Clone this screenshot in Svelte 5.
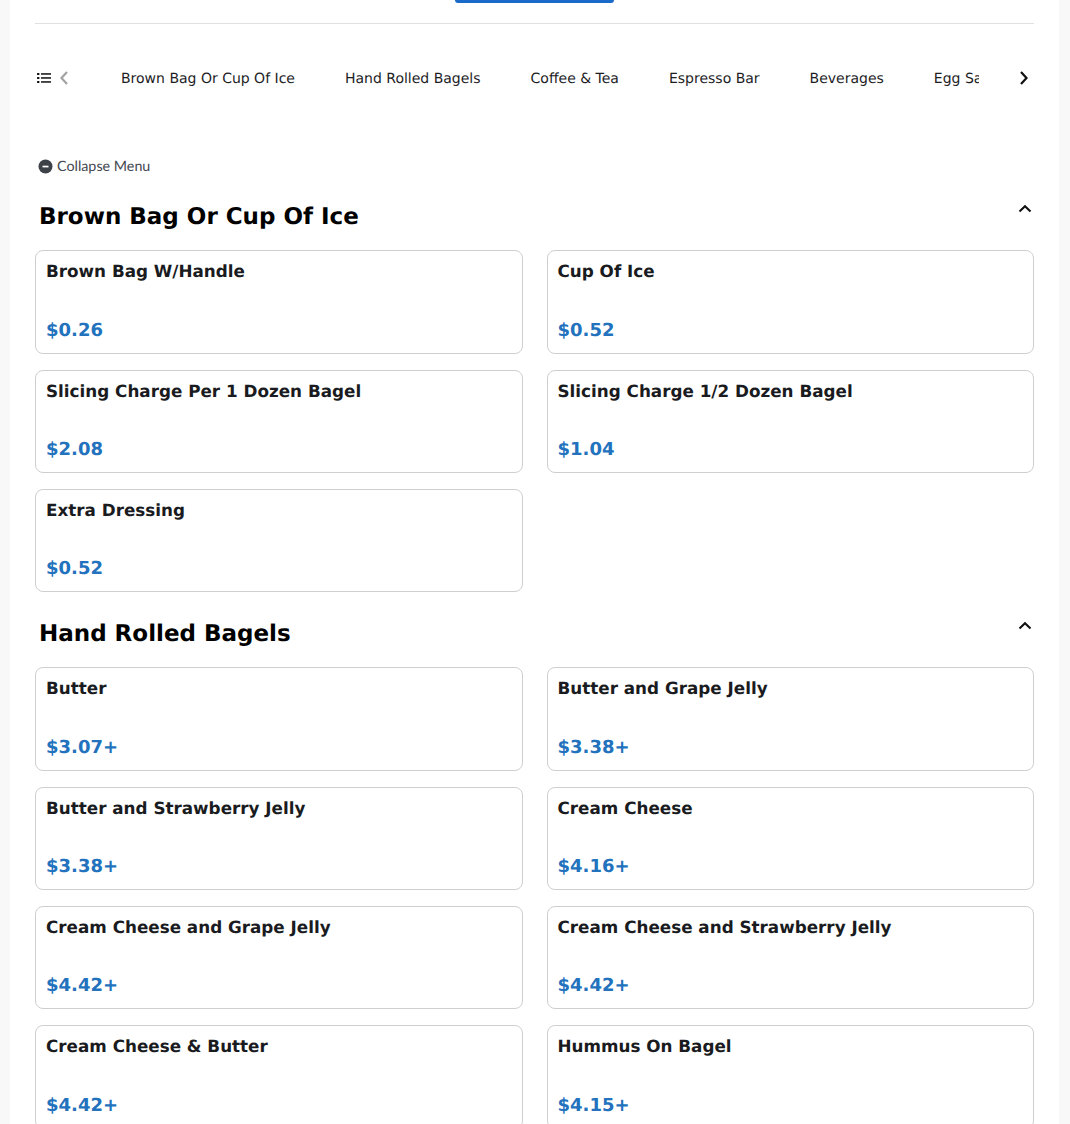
<script>
  const tabs = [
    'Brown Bag Or Cup Of Ice',
    'Hand Rolled Bagels',
    'Coffee & Tea',
    'Espresso Bar',
    'Beverages',
    'Egg Sandwiches'
  ];

  const sections = [
    {
      title: 'Brown Bag Or Cup Of Ice',
      items: [
        { name: 'Brown Bag W/Handle', price: '$0.26' },
        { name: 'Cup Of Ice', price: '$0.52' },
        { name: 'Slicing Charge Per 1 Dozen Bagel', price: '$2.08' },
        { name: 'Slicing Charge 1/2 Dozen Bagel', price: '$1.04' },
        { name: 'Extra Dressing', price: '$0.52' }
      ]
    },
    {
      title: 'Hand Rolled Bagels',
      items: [
        { name: 'Butter', price: '$3.07+' },
        { name: 'Butter and Grape Jelly', price: '$3.38+' },
        { name: 'Butter and Strawberry Jelly', price: '$3.38+' },
        { name: 'Cream Cheese', price: '$4.16+' },
        { name: 'Cream Cheese and Grape Jelly', price: '$4.42+' },
        { name: 'Cream Cheese and Strawberry Jelly', price: '$4.42+' },
        { name: 'Cream Cheese & Butter', price: '$4.42+' },
        { name: 'Hummus On Bagel', price: '$4.15+' }
      ]
    }
  ];
</script>

<div class="page">
  <div class="top">
    <div class="order-btn"></div>
  </div>

  <nav class="tabbar">
    <svg class="list-icon" width="14" height="12" viewBox="0 0 14 12">
      <rect x="0" y="1" width="2.4" height="2" rx="0.6" fill="#111" />
      <rect x="0" y="5" width="2.4" height="2" rx="0.6" fill="#111" />
      <rect x="0" y="9" width="2.4" height="2" rx="0.6" fill="#111" />
      <rect x="4" y="1.2" width="10" height="1.5" fill="#111" />
      <rect x="4" y="5.2" width="10" height="1.5" fill="#111" />
      <rect x="4" y="9.2" width="10" height="1.5" fill="#111" />
    </svg>
    <svg class="prev" width="10" height="16" viewBox="0 0 10 16">
      <path d="M8 2 L2.5 8 L8 14" fill="none" stroke="#a3a3a3" stroke-width="2.2" />
    </svg>
    <div class="tabs">
      {#each tabs as tab}
        <span class="tab">{tab}</span>
      {/each}
    </div>
    <svg class="next" width="10" height="16" viewBox="0 0 10 16">
      <path d="M2 2 L7.5 8 L2 14" fill="none" stroke="#111" stroke-width="2.2" />
    </svg>
  </nav>

  <div class="collapse">
    <svg width="15" height="15" viewBox="0 0 15 15">
      <circle cx="7.5" cy="7.5" r="7" fill="#3d4249" />
      <rect x="4.5" y="6.7" width="6" height="1.7" fill="#fff" />
    </svg>
    <span>Collapse Menu</span>
  </div>

  {#each sections as section}
    <section>
      <header class="section-head">
        <h2>{section.title}</h2>
        <svg width="14" height="10" viewBox="0 0 14 10">
          <path d="M1.5 7.5 L7 2.2 L12.5 7.5" fill="none" stroke="#111" stroke-width="2.1" />
        </svg>
      </header>
      <div class="grid">
        {#each section.items as item}
          <div class="card">
            <div class="name">{item.name}</div>
            <div class="price">{item.price}</div>
          </div>
        {/each}
      </div>
    </section>
  {/each}
</div>

<style>
  :global(body) {
    background: #f8f8f8;
    font-family: "DejaVu Sans", sans-serif;
    text-rendering: geometricPrecision;
  }

  .page {
    box-sizing: border-box;
    width: 1049px;
    height: 1124px;
    margin-left: 10px;
    padding: 0 25px;
    overflow: hidden;
    background: #fff;
  }

  .top {
    height: 23px;
    display: flex;
    justify-content: center;
    border-bottom: 1px solid #e0e0e0;
  }

  .order-btn {
    width: 159px;
    height: 3px;
    background: #1a6ac9;
    border-radius: 0 0 4px 4px;
  }

  .tabbar {
    display: flex;
    align-items: center;
    height: 108px;
    padding: 0 0 0 2px;
  }

  .list-icon {
    flex: none;
  }

  .prev {
    flex: none;
    margin-left: 8px;
  }

  .tabs {
    flex: none;
    display: flex;
    gap: 50px;
    width: 858px;
    margin-left: 52px;
    margin-top: 2px;
    overflow: hidden;
    white-space: nowrap;
    font-size: 14px;
    color: #1d1d1f;
  }

  .next {
    flex: none;
    margin-left: 40px;
  }

  .collapse {
    display: flex;
    align-items: center;
    gap: 4.5px;
    height: 19px;
    margin-top: 25px;
    margin-bottom: -1px;
    padding-left: 2.5px;
    font-family: Lato, sans-serif;
    font-size: 14.3px;
    color: #44484f;
  }

  .section-head {
    display: flex;
    justify-content: space-between;
    height: 54px;
    padding: 0 2px 0 4px;
    margin-top: 21.2px;
  }

  .section-head h2 {
    margin: 0;
    font-size: 23px;
    line-height: 42px;
    font-weight: 700;
    color: #000;
  }

  .section-head svg {
    margin-top: 8px;
  }

  .grid {
    display: grid;
    grid-template-columns: 1fr 1fr;
    gap: 16px 24px;
  }

  .card {
    box-sizing: border-box;
    height: 103.33px;
    padding: 9px 10px 10px;
    display: flex;
    flex-direction: column;
    justify-content: space-between;
    border: 1px solid #cfcfcf;
    border-radius: 8px;
  }

  .name {
    font-size: 16.8px;
    line-height: 22px;
    font-weight: 700;
    color: #191b20;
  }

  .price {
    font-size: 18px;
    line-height: 24px;
    font-weight: 700;
    color: #2272bd;
  }
</style>
